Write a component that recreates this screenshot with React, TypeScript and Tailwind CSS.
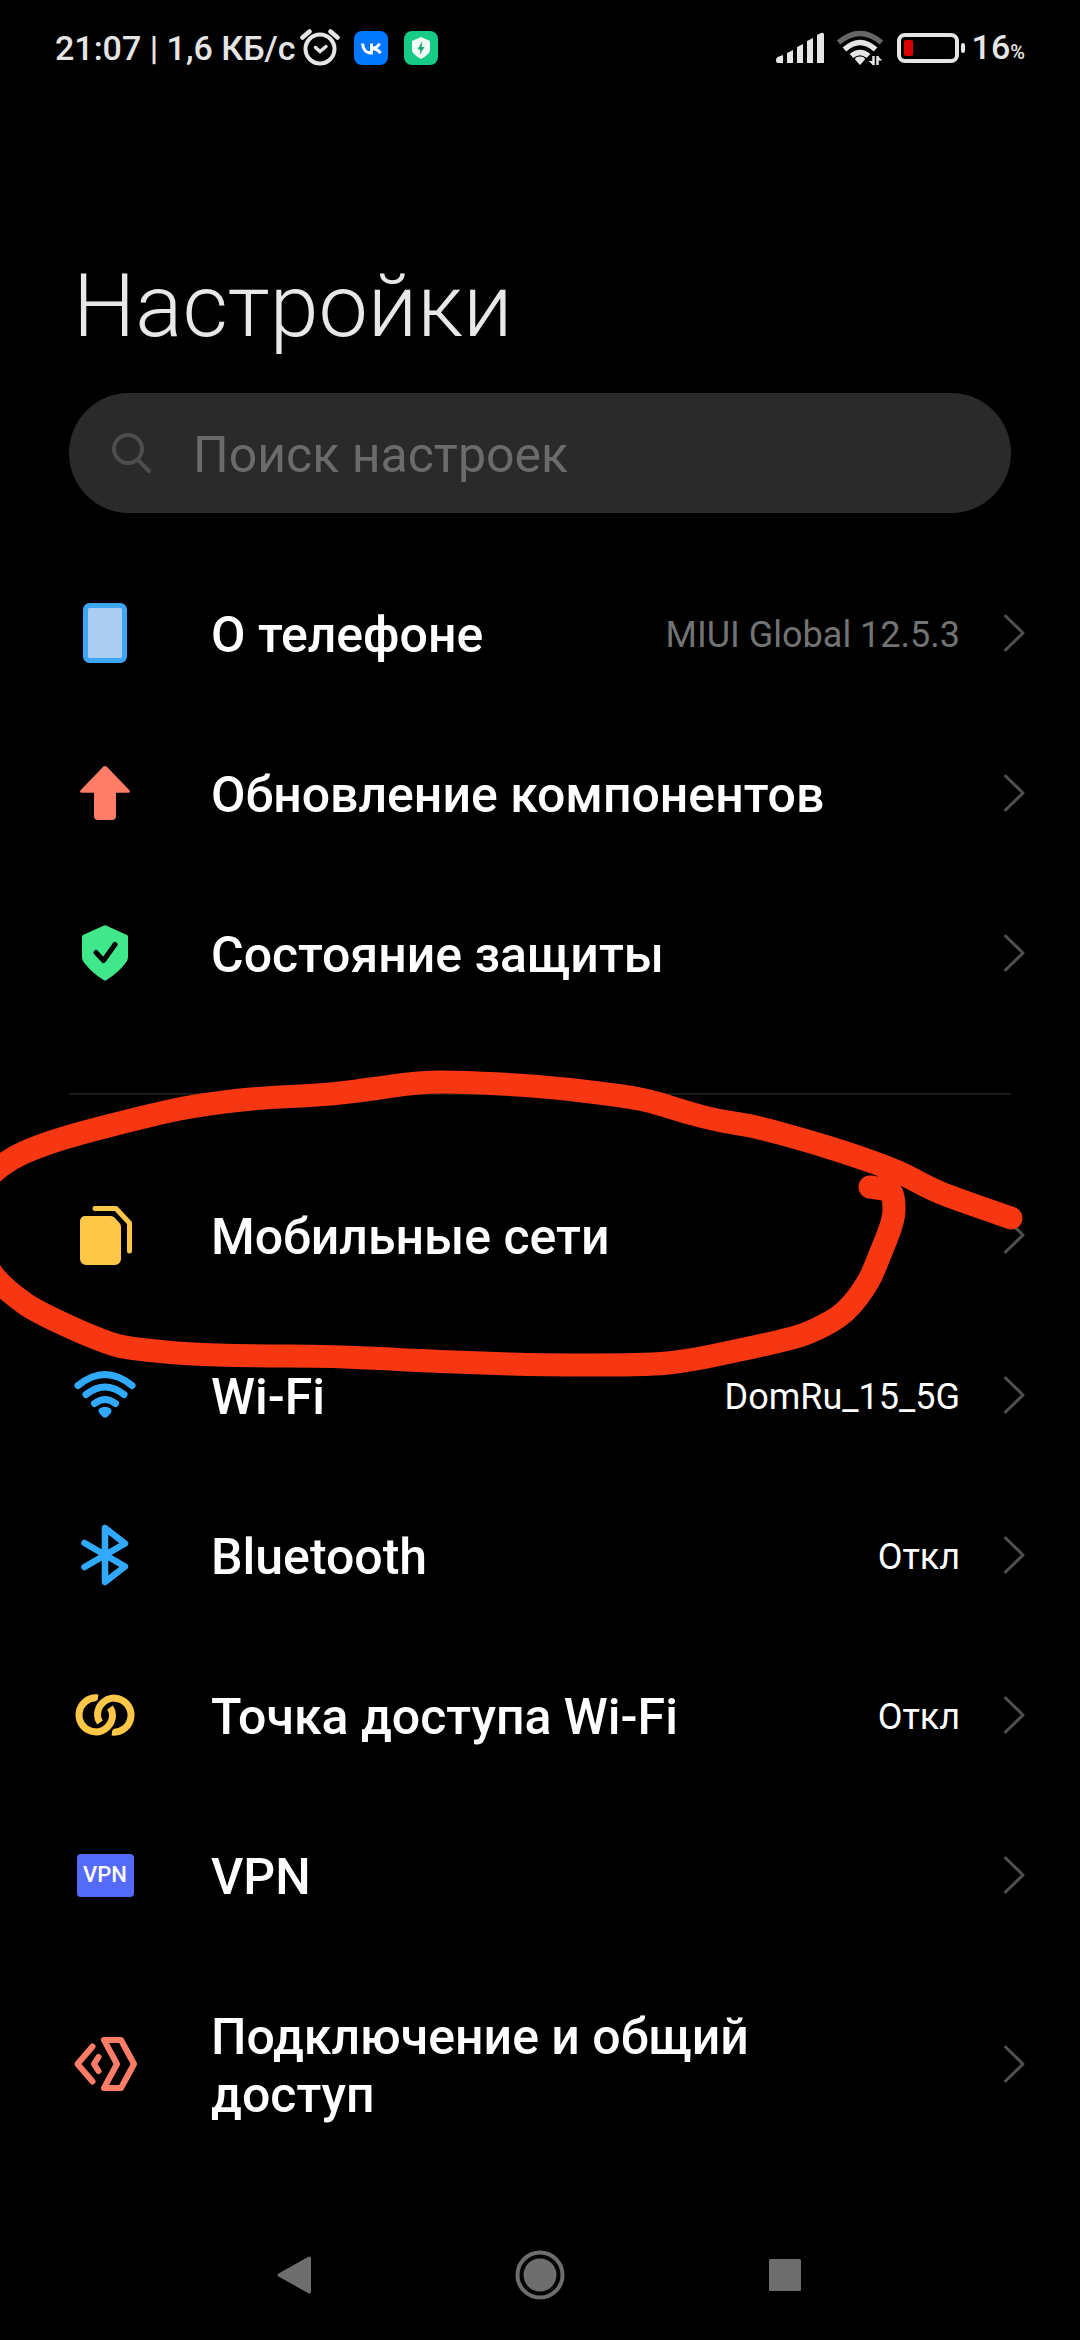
import type { ReactNode } from 'react';

interface SettingItem {
    id: string;
    label: string;
    icon: ReactNode;
    value?: string;
    muted?: boolean;
    marked?: boolean;
}

const PhoneIcon = () => (
    <svg width="64" height="64" viewBox="0 0 64 64">
        <rect x="12.5" y="4.5" width="39" height="55" rx="4" fill="#adcdf0" stroke="#3ea6f6" strokeWidth="5" />
    </svg>
);

const UpdateIcon = () => (
    <svg width="64" height="64" viewBox="0 0 64 64" fill="#ff7d66">
        <path d="M30.4 5.6a2.4 2.4 0 0 1 3.2 0L56.4 29.2c1 1.2.4 2.6-1 2.6H43V55a4 4 0 0 1-4 4H25a4 4 0 0 1-4-4V31.8H8.6c-1.4 0-2-1.4-1-2.6z" />
    </svg>
);

const ShieldIcon = () => (
    <svg width="64" height="64" viewBox="0 0 64 64">
        <path d="M31 4.5q1-.6 2 0L54 14q1 .5 1 1.5V36q0 3-2 5.5Q45 52 33.500 59q-1.5 1-3 0Q19 52 11 41.500 9 39 9 36V15.5q0-1 1-1.5z" fill="#40e88b" />
        <path d="m23 31.500 7.500 8L42 23.500" fill="none" stroke="#000" strokeWidth="5" strokeLinecap="round" strokeLinejoin="round" />
    </svg>
);

const SimIcon = () => (
    <svg width="64" height="64" viewBox="0 0 64 64">
        <path d="M12 13h26q2 0 3.500 1.500l5 5.500Q48 21.500 48 24v32a6 6 0 0 1-6 6H13a6 6 0 0 1-6-6V18a5 5 0 0 1 5-5z" fill="#ffc747" />
        <path d="M22 5.500h21L56.500 20v28" fill="none" stroke="#ffc747" strokeWidth="5" strokeLinecap="round" strokeLinejoin="round" />
    </svg>
);

const WifiIcon = () => (
    <svg width="64" height="64" viewBox="0 0 64 64" fill="none" stroke="#31a9ff" strokeWidth="7" strokeLinecap="round">
        <path d="M5 22.500Q32 .5 59 22.500" />
        <path d="M13 31.500Q32 16.500 51 31.500" />
        <path d="M21.500 40.500Q32 32.500 42.500 40.500" />
        <path d="M32 44c3.500 0 6.500 1 6.500 4 0 2-2.500 4-4.500 6q-2 1.500-4 0c-2-2-4.500-4-4.500-6 0-3 3-4 6.500-4z" fill="#31a9ff" stroke="none" />
    </svg>
);

const BluetoothIcon = () => (
    <svg width="64" height="64" viewBox="0 0 64 64" fill="none" stroke="#31a9ff" strokeWidth="6.500" strokeLinecap="round" strokeLinejoin="round">
        <path d="M11.500 20 52 43.500 32 59V5l20 15.500L11.500 44" />
    </svg>
);

const HotspotIcon = () => (
    <svg width="64" height="64" viewBox="0 0 64 64" fill="none" stroke="#ffc747" strokeWidth="7">
        <path d="M25 15A17 17 0 1 0 40 32" />
        <path d="M39 49A17 17 0 1 0 24 32" />
        {/* gap where the rings cross */}
        <path d="M25 36A17 17 0 0 1 41 15M39 28A17 17 0 0 1 23 49" stroke="#000" strokeWidth="12" />
        <path d="M27 39.500Q24.500 36 24.500 32A17 17 0 0 1 41.500 15" />
        <path d="M37 24.500Q39.500 28 39.500 32A17 17 0 0 1 22.500 49" />
    </svg>
);

const VpnIcon = () => (
    <span className="flex h-[43px] w-[57px] items-center justify-center rounded-sm bg-[#546bfa] text-[22px] leading-none font-medium text-white">
        VPN
    </span>
);

const ShareIcon = () => (
    <svg width="64" height="64" viewBox="0 0 64 64" fill="none" stroke="#ff7d66" strokeWidth="6" strokeLinecap="round" strokeLinejoin="round">
        <path d="M19.500 14.500 4.500 32l15 17.500" />
        <path d="M25.500 25 21 32l4.500 7" />
        <path d="M31 8h17l13 24-13 24H31l13-24z" />
    </svg>
);

const deviceItems: SettingItem[] = [
    { id: 'about', label: 'О телефоне', icon: <PhoneIcon />, value: 'MIUI Global 12.5.3', muted: true },
    { id: 'update', label: 'Обновление компонентов', icon: <UpdateIcon /> },
    { id: 'security', label: 'Состояние защиты', icon: <ShieldIcon /> },
];

const networkItems: SettingItem[] = [
    { id: 'mobile', label: 'Мобильные сети', icon: <SimIcon />, marked: true },
    { id: 'wifi', label: 'Wi-Fi', icon: <WifiIcon />, value: 'DomRu_15_5G' },
    { id: 'bluetooth', label: 'Bluetooth', icon: <BluetoothIcon />, value: 'Откл' },
    { id: 'hotspot', label: 'Точка доступа Wi-Fi', icon: <HotspotIcon />, value: 'Откл' },
    { id: 'vpn', label: 'VPN', icon: <VpnIcon /> },
    { id: 'share', label: 'Подключение и общий доступ', icon: <ShareIcon /> },
];

// points of the hand-drawn marker line
const markerPoints = [
    [1011, 148], [953, 128], [929, 118], [898, 101], [850, 84], [808, 71], [754, 56], [719, 51],
    [685, 42], [657, 33], [636, 28], [600, 23], [540, 16], [461, 12], [420, 12], [365, 20], [324, 25],
    [255, 28], [193, 36], [151, 45], [69, 66], [34, 78], [12, 88], [-10, 104], [-30, 130], [-30, 170],
    [-12, 198], [-2, 212], [17, 228], [34, 240], [76, 260], [103, 271], [121, 277], [145, 280],
    [186, 284], [248, 286], [331, 286], [427, 291], [482, 293], [540, 295], [654, 295], [692, 290],
    [726, 283], [791, 269], [816, 260], [846, 243], [869, 212], [879, 187], [894, 150], [894, 130],
    [891, 120], [870, 117],
];

function smoothPath(points: number[][]) {
    let d = `M${points[0][0]} ${points[0][1]}`;
    for (let i = 1; i < points.length - 1; i++) {
        const [x, y] = points[i];
        const [nx, ny] = points[i + 1];
        d += ` Q${x} ${y} ${(x + nx) / 2} ${(y + ny) / 2}`;
    }
    const last = points[points.length - 1];
    return `${d} L${last[0]} ${last[1]}`;
}

function Marker() {
    return (
        <svg className="pointer-events-none absolute -top-[85px] left-0 z-10 w-full" viewBox="0 0 1080 310" aria-hidden="true">
            <path
                d={smoothPath(markerPoints)}
                fill="none"
                stroke="#f73612"
                strokeWidth="23"
                strokeLinecap="round"
                strokeLinejoin="round"
            />
        </svg>
    );
}

function SettingRow({ item }: { item: SettingItem }) {
    return (
        <li className="relative">
            <button type="button" className="flex w-full items-center py-[49px] pr-[54px] pl-[73px] text-left">
                <span className="flex h-10 w-16 shrink-0 items-center justify-center">{item.icon}</span>
                <span className="ml-[74px] max-w-[640px] pt-1 text-[50px] leading-[58px] font-medium text-white">
                    {item.label}
                </span>
                {item.value && (
                    <span className={`ml-auto pt-1 text-[36px] leading-[44px] ${item.muted ? 'text-[#737373]' : 'text-white'}`}>
                        {item.value}
                    </span>
                )}
                <svg
                    className={`shrink-0 ${item.value ? 'ml-[42px]' : 'ml-auto'}`}
                    width="24"
                    height="40"
                    viewBox="0 0 24 40"
                    fill="none"
                    stroke="#505050"
                    strokeWidth="3"
                    strokeLinecap="round"
                    strokeLinejoin="round"
                >
                    <path d="m3.500 3 17.500 17L3.500 37" />
                </svg>
            </button>
            {item.marked && <Marker />}
        </li>
    );
}

function StatusBar() {
    return (
        <div className="flex h-24 items-center justify-between pr-[55px] pl-[55px] text-[33px] leading-[40px] font-medium text-[#e5e5e5]">
            <div className="flex items-center">
                <span className="text-[34px]">21:07 | 1,6 КБ/с</span>
                <svg className="ml-1" width="40" height="40" viewBox="0 0 40 40" fill="none" stroke="#e5e5e5" strokeLinecap="round">
                    <circle cx="20" cy="21" r="14.500" strokeWidth="4" />
                    <path d="m2.500 9.500 7-6M37.500 9.500l-7-6" strokeWidth="4.500" />
                    <path d="m15.500 19.500 4.500 4 6-5" strokeWidth="3.500" />
                </svg>
                <svg className="ml-3.5" width="34" height="34" viewBox="0 0 34 34">
                    <rect width="34" height="34" rx="8" fill="#0077ff" />
                    <path
                        d="M8.500 12.500c.5 6 3.500 9.500 9 9.500v-9.500M25.500 12.500c-1 2.500-3.500 4.500-7.500 5 4 .3 7 2 8.500 4.800"
                        fill="none"
                        stroke="#fff"
                        strokeWidth="3"
                    />
                </svg>
                <svg className="ml-4" width="34" height="34" viewBox="0 0 34 34">
                    <rect width="34" height="34" rx="8" fill="#17cb86" />
                    <path d="m17 6 9 4v9q0 4-9 9-9-5-9-9v-9z" fill="#f2fff9" />
                    <path d="m18.500 10-5 8.500h3l-1 5.500 5-8h-3z" fill="#17a56c" />
                </svg>
            </div>
            <div className="flex items-center">
                <svg width="48" height="32" viewBox="0 0 48 32" fill="#e5e5e5">
                    <path d="M0 28q0-2.500 3-3.500l4-1.500v8H2q-2 0-2-2zM11 21l6-3v13h-6zM21 15l6-3v19h-6zM31 9l6-3v25h-6zM41 3l4-2q3-1 3 1.500V31h-7z" />
                </svg>
                <svg className="ml-3" width="48" height="36" viewBox="0 0 48 36" fill="none" stroke="#e5e5e5" strokeWidth="5.500">
                    <path d="M2.500 12.500Q24-5.500 45.500 12.500" stroke="#666" />
                    <path d="M8.500 19.500Q24 5.500 39.500 19.500" />
                    <path d="M15.500 26Q24 19 32.500 26" />
                    <path d="M24 26.500q5 0 5 3L24 35l-5-5.500Q19 26.500 24 26.500z" fill="#e5e5e5" stroke="none" />
                    <path d="M37.500 26v9M41.500 35v-9" strokeWidth="2.500" />
                    <path d="M32.500 31h5v4.500zM46.500 30.500h-5V26z" fill="#e5e5e5" stroke="none" />
                </svg>
                <svg className="ml-3" width="70" height="32" viewBox="0 0 70 32">
                    <rect x="3" y="3" width="58" height="26" rx="6" fill="none" stroke="#e5e5e5" strokeWidth="4" />
                    <rect x="8" y="8" width="9" height="16" rx="2" fill="#d80000" />
                    <rect x="65" y="11" width="4" height="10" rx="2" fill="#e5e5e5" />
                </svg>
                <span className="ml-1.5 pt-0.5 text-[34px]">
                    16<span className="text-[20px]">%</span>
                </span>
            </div>
        </div>
    );
}

function NavBar() {
    return (
        <nav className="grid h-[130px] grid-cols-3 place-items-center px-[172px]">
            <button type="button" aria-label="Назад">
                <svg width="50" height="50" viewBox="0 0 50 50" fill="#6e6e6e">
                    <path d="M8.500 23.500 38 7q3-1.500 3 1.500v33q0 3-3 1.500L8.500 26.500q-2-1.500 0-3z" />
                </svg>
            </button>
            <button type="button" aria-label="Домой">
                <svg width="50" height="50" viewBox="0 0 50 50">
                    <circle cx="25" cy="25" r="22.500" fill="none" stroke="#6e6e6e" strokeWidth="4" />
                    <circle cx="25" cy="25" r="16.500" fill="#6e6e6e" />
                </svg>
            </button>
            <button type="button" aria-label="Недавние">
                <svg width="50" height="50" viewBox="0 0 50 50">
                    <rect x="9" y="9" width="32" height="32" rx="1.500" fill="#6e6e6e" />
                </svg>
            </button>
        </nav>
    );
}

export default function App() {
    return (
        <div className="flex min-h-screen flex-col overflow-x-hidden bg-black font-['Roboto',sans-serif]">
            <StatusBar />
            <main className="flex-1">
                <h1 className="mt-[158px] px-[73px] text-[88px] leading-[104px] font-light text-[#e8e8e8]">Настройки</h1>
                <label className="mx-[69px] mt-[35px] flex h-[120px] items-center rounded-full bg-[#2a2a2a] pr-10 pl-[42px]">
                    <svg className="shrink-0" width="42" height="42" viewBox="0 0 42 42" fill="none" stroke="#4d4d4d" strokeWidth="4" strokeLinecap="round">
                        <circle cx="17" cy="17" r="14" />
                        <path d="m27 28 11 11" />
                    </svg>
                    <input
                        type="text"
                        aria-label="Поиск настроек"
                        placeholder="Поиск настроек"
                        className="ml-10 w-full bg-transparent pt-1 text-[50px] leading-[58px] text-white outline-none placeholder:text-[#6b6b6b]"
                    />
                </label>
                <ul className="mt-10">
                    {deviceItems.map((item) => (
                        <SettingRow key={item.id} item={item} />
                    ))}
                </ul>
                <hr className="mx-[69px] my-[60px] border-t-2 border-[#1c1c1c]" />
                <ul>
                    {networkItems.map((item) => (
                        <SettingRow key={item.id} item={item} />
                    ))}
                </ul>
            </main>
            <NavBar />
        </div>
    );
}
